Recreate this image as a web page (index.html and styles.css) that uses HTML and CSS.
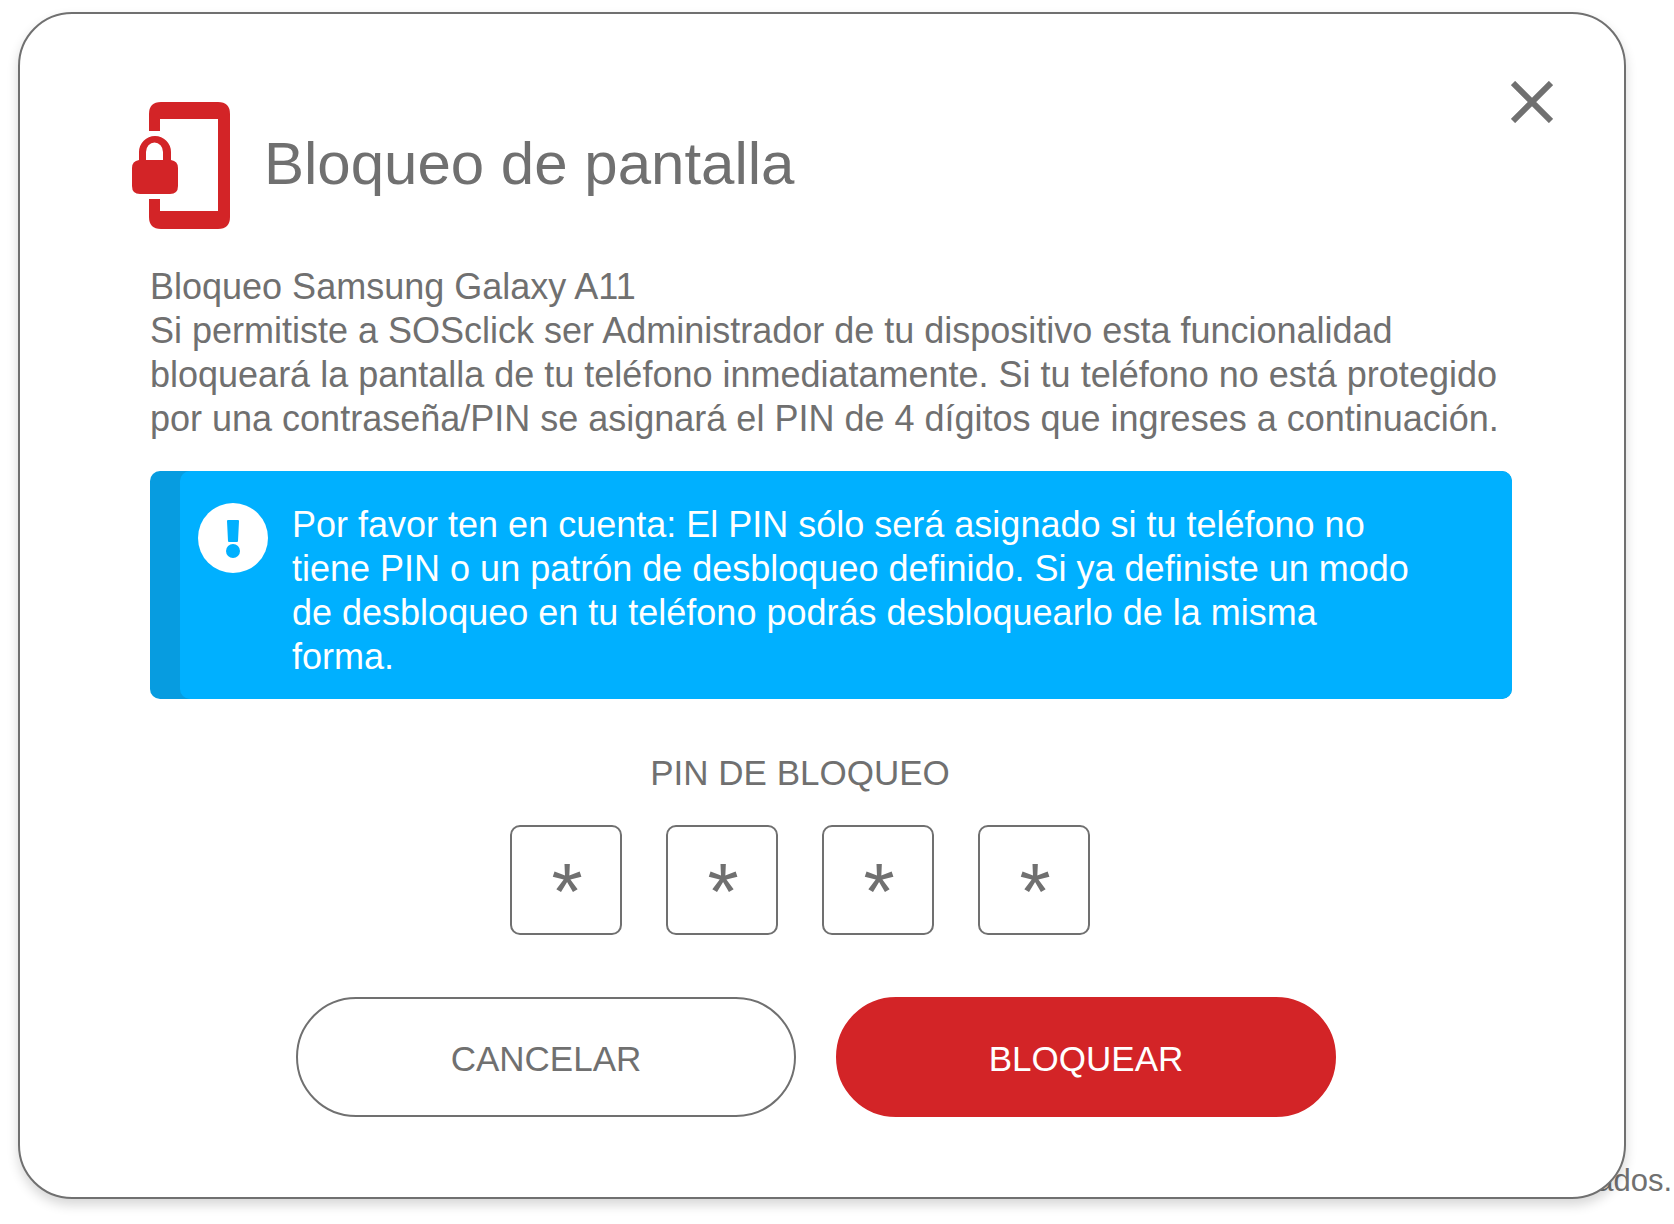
FILE: index.html
```html
<!DOCTYPE html>
<html lang="es">
<head>
    <meta charset="UTF-8">
    <meta name="viewport" content="width=device-width, initial-scale=1.0">
    <title>Bloqueo de pantalla</title>
    <link rel="stylesheet" href="styles.css">
</head>
<body>
    <main class="modal" role="dialog" aria-labelledby="modalTitle">
        <button type="button" class="close" aria-label="Cerrar">
            <svg width="42" height="42" viewBox="0 0 42 42">
                <path d="M2 2L40 40M40 2L2 40" stroke="currentColor" stroke-width="6"/>
            </svg>
        </button>

        <header class="modal-header">
            <svg class="lock-icon" width="98" height="127" viewBox="0 0 98 127">
                <path d="M17 29V12Q17 0 29 0H86Q98 0 98 12V115Q98 127 86 127H29Q17 127 17 115V97H28V109H86V17H28V29Z"/>
                <path d="M7 58V50A16 16 0 0 1 39 50V58Q46 59 46 66V84Q46 92 38 92H8Q0 92 0 84V66Q0 59 7 58ZM14 58H31V50A8 9 0 0 0 14 50Z" fill-rule="evenodd"/>
            </svg>
            <h1 id="modalTitle">Bloqueo de pantalla</h1>
        </header>

        <p class="description">Bloqueo Samsung Galaxy A11<br>
            Si permitiste a SOSclick ser Administrador de tu dispositivo esta funcionalidad<br>
            bloqueará la pantalla de tu teléfono inmediatamente. Si tu teléfono no está protegido<br>
            por una contraseña/PIN se asignará el PIN de 4 dígitos que ingreses a continuación.</p>

        <div class="notice">
            <svg class="notice-icon" width="70" height="70" viewBox="0 0 70 70">
                <circle cx="35" cy="35" r="35" fill="#fff"/>
                <path d="M29 18Q29 17 30 17H40Q41 17 41 18L40 38Q40 39 39 39H31Q30 39 30 38Z"/>
                <circle cx="35" cy="48" r="7"/>
            </svg>
            <p>Por favor ten en cuenta: El PIN sólo será asignado si tu teléfono no<br>
                tiene PIN o un patrón de desbloqueo definido. Si ya definiste un modo<br>
                de desbloqueo en tu teléfono podrás desbloquearlo de la misma<br>
                forma.</p>
        </div>

        <form id="lockForm">
            <fieldset class="pin">
                <legend>PIN DE BLOQUEO</legend>
                <div class="pin-inputs">
                    <input type="text" maxlength="1" value="*" aria-label="Dígito 1">
                    <input type="text" maxlength="1" value="*" aria-label="Dígito 2">
                    <input type="text" maxlength="1" value="*" aria-label="Dígito 3">
                    <input type="text" maxlength="1" value="*" aria-label="Dígito 4">
                </div>
            </fieldset>

            <div class="actions">
                <button type="button" class="btn cancel">CANCELAR</button>
                <button type="submit" class="btn lock">BLOQUEAR</button>
            </div>
        </form>
    </main>

    <footer class="page-footer">ados.</footer>
</body>
</html>
```

FILE: styles.css
```css
:root {
  --gris: #707070;
  --rojo: #d32427;
  --azul: #00b0ff;
  --azul-oscuro: #079ce0;
}

*,
*::before,
*::after {
  box-sizing: border-box;
}

body {
  position: relative;
  margin: 0;
  padding: 12px 48px 24px 18px;
  background-color: #fff;
  color: var(--gris);
  font-family: "Helvetica Neue", "Liberation Sans", Arial, sans-serif;
  font-size: 36px;
  line-height: 44px;
}

p {
  margin: 0;
}

.modal {
  position: relative;
  padding: 88px 112px 80px 130px;
  background-color: #fff;
  border: 2px solid var(--gris);
  border-radius: 54px;
  box-shadow: 0 6px 12px rgba(0, 0, 0, 0.16);
}

.close {
  position: absolute;
  top: 67px;
  right: 71px;
  padding: 0;
  border: none;
  background: none;
  color: var(--gris);
  cursor: pointer;
}

.close svg {
  display: block;
}

.modal-header {
  display: flex;
  align-items: center;
  gap: 34px;
  margin-left: -18px;
}

.lock-icon {
  fill: var(--rojo);
}

h1 {
  margin: 0;
  padding-bottom: 4px;
  font-size: 60px;
  font-weight: 400;
  line-height: 72px;
}

.description {
  margin-top: 36px;
  white-space: nowrap;
}

.notice {
  position: relative;
  z-index: 0;
  display: flex;
  align-items: flex-start;
  gap: 24px;
  margin-top: 30px;
  padding: 32px 40px 20px 48px;
  border-radius: 10px;
  background: var(--azul-oscuro);
  color: #fff;
  overflow: hidden;
  white-space: nowrap;
}

/* deja ver la franja oscura a la izquierda */
.notice::before {
  content: "";
  position: absolute;
  inset: 0 0 0 30px;
  border-radius: 10px;
  background: var(--azul);
  z-index: -1;
}

.notice-icon {
  flex: none;
  fill: var(--azul);
}

.pin {
  margin: 52px 62px 0 0;
  padding: 0;
  border: none;
}

.pin legend {
  width: 100%;
  padding: 0;
  font-size: 35px;
  text-align: center;
}

.pin-inputs {
  display: flex;
  justify-content: center;
  gap: 44px;
  margin-top: 30px;
}

.pin-inputs input {
  width: 112px;
  height: 110px;
  padding: 24px 0 0 2px;
  border: 2px solid var(--gris);
  border-radius: 10px;
  background: #fff;
  color: var(--gris);
  font-family: inherit;
  font-size: 80px;
  text-align: center;
}

.actions {
  display: flex;
  justify-content: center;
  gap: 40px;
  margin: 62px 30px 0 0;
}

.btn {
  width: 500px;
  height: 120px;
  padding: 4px 0 0;
  border: 2px solid var(--gris);
  border-radius: 60px;
  background: #fff;
  color: var(--gris);
  font-family: inherit;
  font-size: 35px;
  cursor: pointer;
}

.lock {
  border-color: var(--rojo);
  background: var(--rojo);
  color: #fff;
}

.page-footer {
  position: absolute;
  right: 2px;
  bottom: 20px;
  z-index: -1;
  font-size: 31px;
}
```
